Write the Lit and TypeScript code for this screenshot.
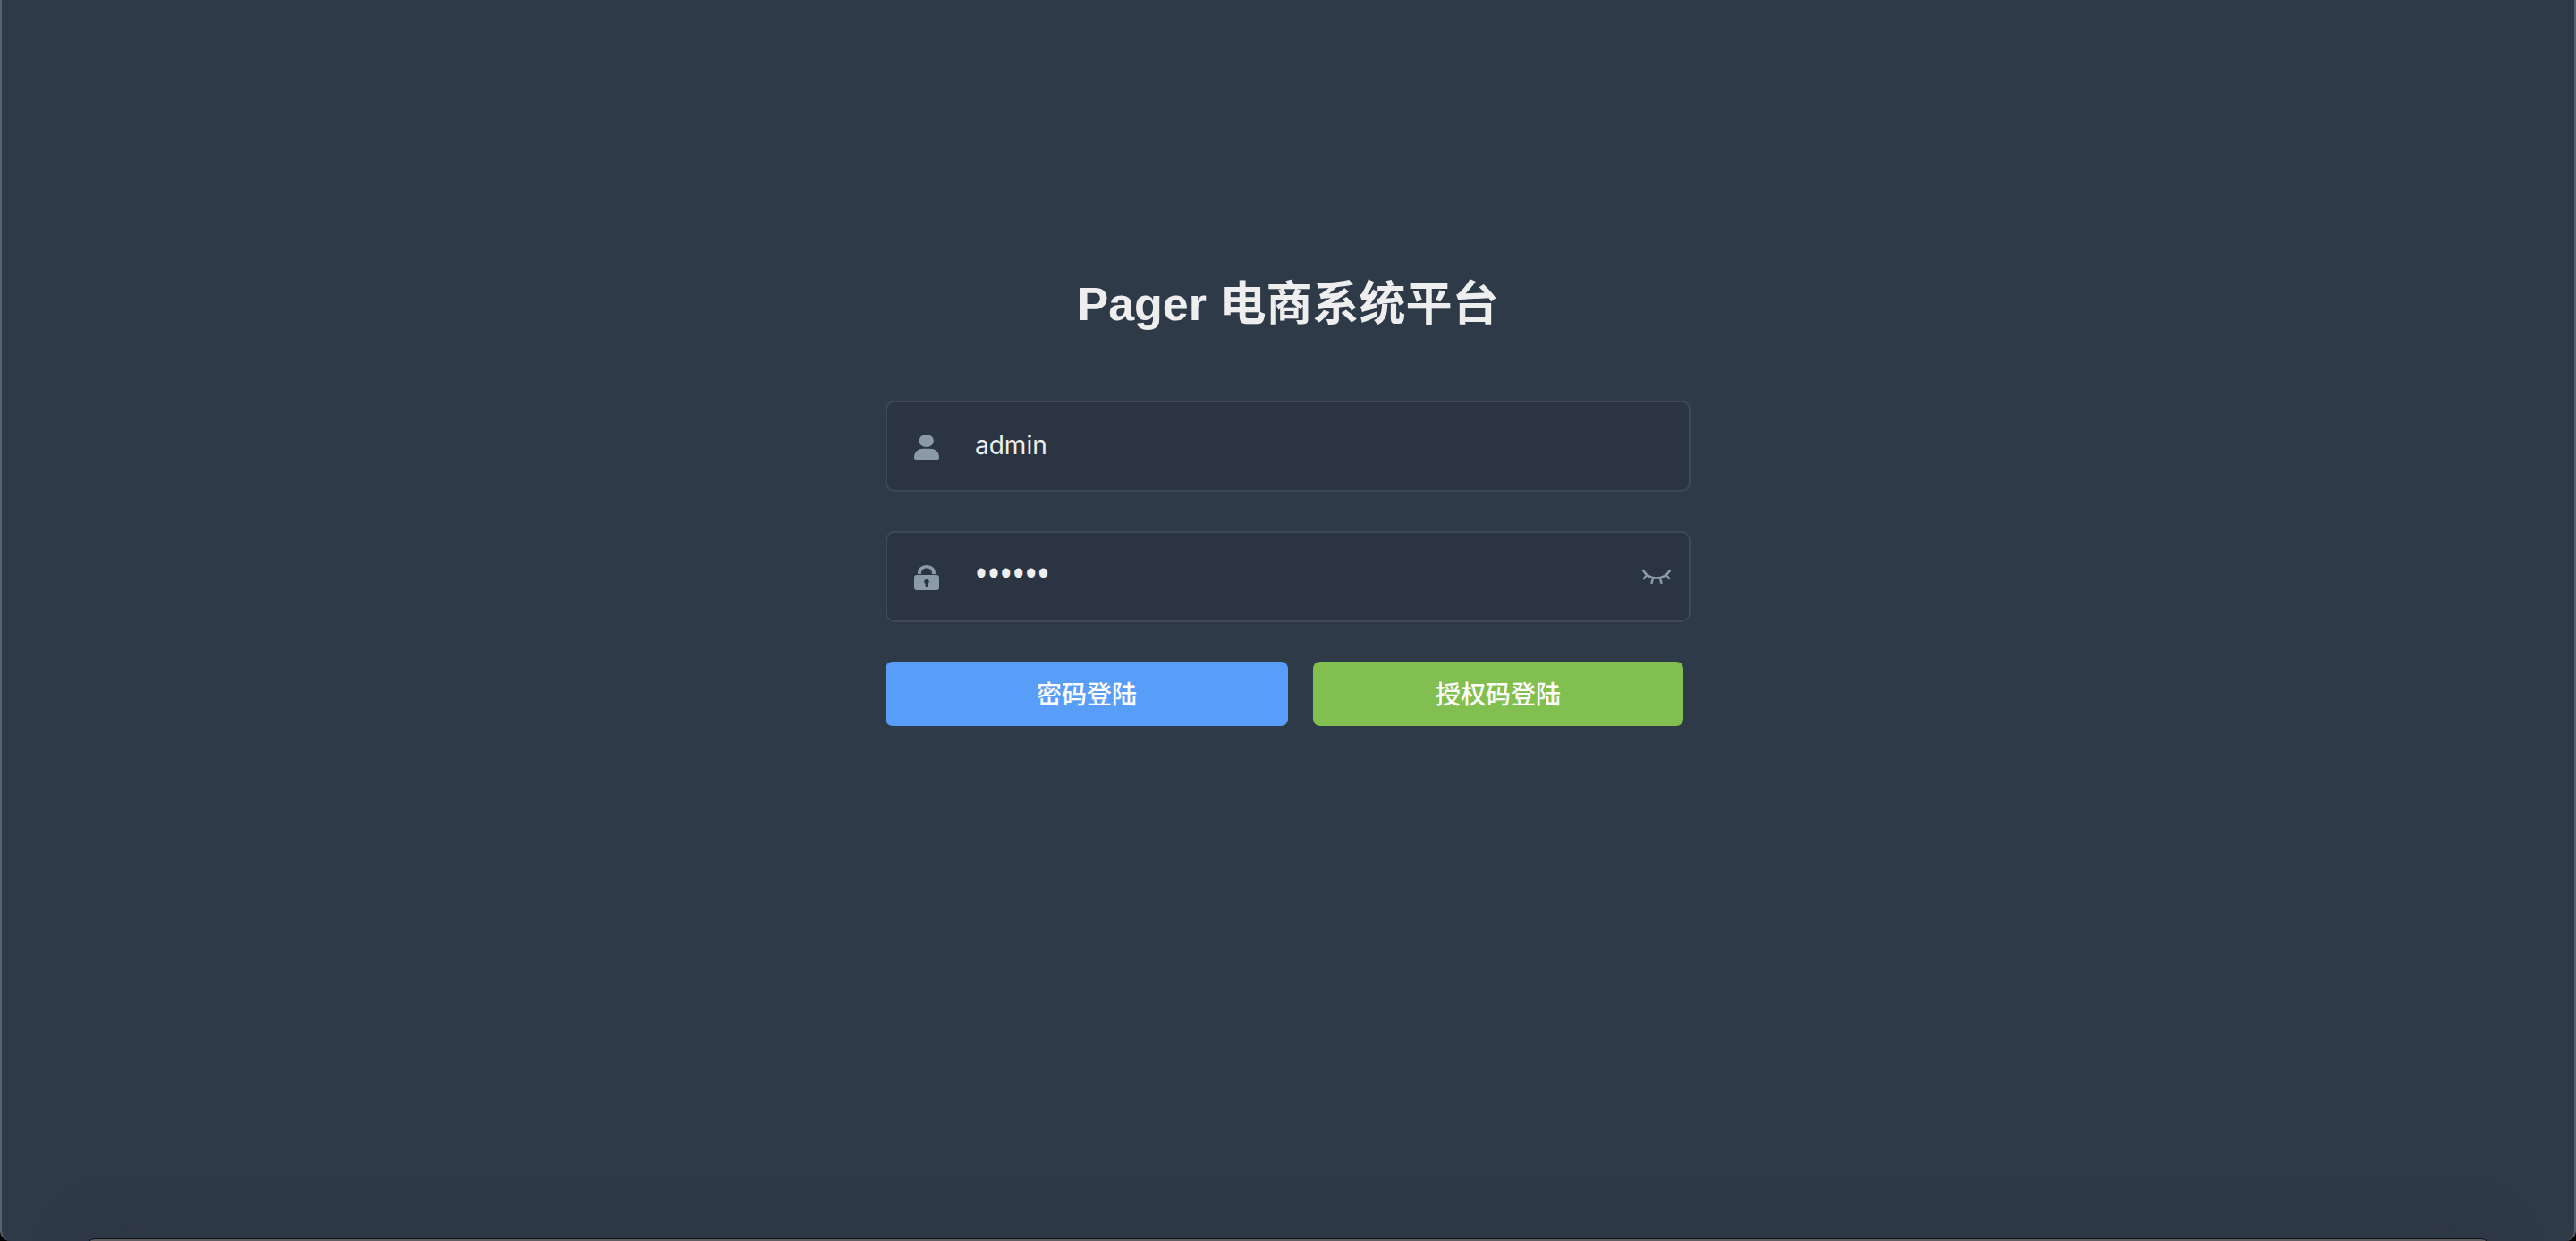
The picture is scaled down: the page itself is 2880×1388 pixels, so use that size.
import { LitElement, html, css } from "lit";
import { customElement, state } from "lit/decorators.js";

@customElement("app-root")
export class AppRoot extends LitElement {
  static styles = css`
    :host {
      display: block;
      font-family: "Liberation Sans", "Noto Sans CJK SC", sans-serif;
      background: #000;
    }
    * {
      box-sizing: border-box;
    }
    .page {
      position: relative;
      min-height: 100vh;
      padding: 304px 32px 64px;
      overflow: hidden;
      background: #2f3a48;
      border: solid #59626d;
      border-width: 0 2px;
      border-radius: 0 0 12px 12px;
    }
    .form {
      display: flex;
      flex-direction: column;
      gap: 44px;
      width: 100%;
      max-width: 900px;
      margin: 0 auto;
    }
    .title {
      margin: 0;
      padding-bottom: 28px;
      font-size: 52px;
      line-height: 72px;
      font-weight: 700;
      text-align: center;
      color: #eee;
    }
    .field {
      display: flex;
      align-items: center;
      height: 102px;
      padding: 2px 18px 0 30px;
      background: #2b3442;
      border: 2px solid #404856;
      border-radius: 10px;
      color: #8b9ba5;
    }
    .icon {
      display: block;
      flex: none;
      width: 28px;
      height: 28px;
    }
    .input {
      flex: 1;
      min-width: 0;
      height: 94px;
      margin: 0;
      padding: 0 0 4px 40px;
      border: 0;
      outline: 0;
      background: transparent;
      color: #eee;
      font-family: Inter, "Liberation Sans", sans-serif;
      font-size: 28px;
      font-weight: 400;
    }
    .secret {
      padding-bottom: 12px;
      font-family: "Open Sans", sans-serif;
      font-size: 37px;
      font-weight: 600;
    }
    .toggle {
      flex: none;
      padding: 0;
      border: 0;
      background: transparent;
      color: inherit;
      cursor: pointer;
    }
    .eye {
      display: block;
      width: 36px;
      height: 28px;
    }
    .actions {
      display: flex;
      gap: 28px;
      padding-right: 8px;
    }
    .button {
      height: 72px;
      padding: 0 0 2px;
      border: 0;
      border-radius: 8px;
      color: #fff;
      font-family: inherit;
      font-size: 28px;
      font-weight: 500;
      cursor: pointer;
    }
    .primary {
      flex: 0 0 450px;
      background: #589ef8;
    }
    .success {
      flex: 1;
      background: #81bf50;
    }
    .dock {
      position: absolute;
      left: 94px;
      right: 94px;
      bottom: -17px;
      height: 20px;
      background: #5e5d60;
      border: 1px solid #0d121b;
      border-radius: 12px;
      box-shadow: 0 0 64px rgba(42, 38, 58, 0.4);
    }
  `;

  @state() private revealed = false;

  private toggle() {
    this.revealed = !this.revealed;
  }

  render() {
    return html`
      <main class="page">
        <form class="form" @submit=${(e: Event) => e.preventDefault()}>
          <h1 class="title">Pager 电商系统平台</h1>
          <div class="field">
            <label for="username" aria-label="用户名">
              <svg class="icon" viewBox="0 0 28 28" fill="currentColor" aria-hidden="true">
                <ellipse cx="13.7" cy="7" rx="8.2" ry="7" />
                <path d="M0 25.500C0 19.500 4.500 15.800 10 15.800H18C23.500 15.800 28 19.500 28 25.500C28 27.200 27.200 28 25.800 28H2.200C.8 28 0 27.200 0 25.500Z" />
              </svg>
            </label>
            <input class="input" id="username" type="text" .value=${"admin"} autocomplete="off" />
          </div>
          <div class="field">
            <label for="password" aria-label="密码">
              <svg class="icon" viewBox="0 0 28 28" fill="currentColor" aria-hidden="true">
                <path d="M4 10V9C4 3.500 8 0 14 0S24 3.500 24 9V10H20V9C20 5.500 17.500 3.500 14 3.500S8 5.500 8 9V10Z" />
                <path fill-rule="evenodd" d="M3 11H25A3 3 0 0 1 28 14V25A3 3 0 0 1 25 28H3A3 3 0 0 1 0 25V14A3 3 0 0 1 3 11ZM14 16C12.300 16 11.200 17.200 11.200 18.600C11.200 19.700 11.800 20.500 12.600 20.900V23C12.600 24.500 15.400 24.500 15.400 23V20.900C16.200 20.500 16.800 19.700 16.800 18.600C16.800 17.200 15.700 16 14 16Z" />
              </svg>
            </label>
            <input
              class="input ${this.revealed ? "" : "secret"}"
              id="password"
              type=${this.revealed ? "text" : "password"}
              .value=${"111111"}
              autocomplete="off"
            />
            <button class="toggle" type="button" aria-label="显示密码" @click=${this.toggle}>
              <svg class="eye" viewBox="0 0 36 28" fill="none" stroke="currentColor" stroke-width="2.500" stroke-linecap="round" aria-hidden="true">
                <path d="M3 6C6.500 11.500 12 14.600 18 14.600S29.500 11.500 33 6M7.500 10.800L4 15M14 14.500L12.600 20M22 14.500L23.400 20M28.500 10.800L32 15" />
              </svg>
            </button>
          </div>
          <div class="actions">
            <button class="button primary" type="submit">密码登陆</button>
            <button class="button success" type="button">授权码登陆</button>
          </div>
        </form>
        <div class="dock"></div>
      </main>
    `;
  }
}
